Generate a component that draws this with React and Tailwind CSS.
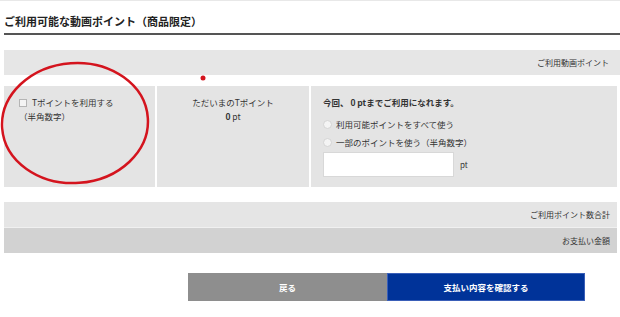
import React from 'react';

const font = { fontFamily: '"Noto Sans CJK JP", "Noto Sans", sans-serif' };

const Radio = ({ label }) => (
    <label className="flex items-center gap-[4px] h-[18px]">
        <span className="w-[9px] h-[9px] rounded-full border border-[#d4d4d4] bg-[#f4f4f4]" />
        <span>{label}</span>
    </label>
);

export default function App() {
    return (
        <div className="relative w-[620px] h-[317px] bg-white text-[#333] overflow-hidden" style={font}>
            <div className="h-[1px] bg-[#e8e8e8]" />

            <div className="pl-[4px]">
                {/* Title */}
                <h2 className="pt-[12px] pb-[4px] text-[11px] font-bold leading-[16px] text-[#222] border-b-2 border-[#555]">
                    ご利用可能な動画ポイント（商品限定）
                </h2>

                {/* Header row */}
                <div className="mt-[15px] h-[25px] bg-[#e6e6e6] flex items-center justify-end pr-[11px] text-[8px]">
                    ご利用動画ポイント
                </div>

                {/* Main row */}
                <div className="mt-[11px] h-[101px] mr-[3px] flex gap-[2px] text-[8.5px] leading-[13px]">
                    <div className="w-[151px] bg-[#e4e4e4] pl-[15px] pt-[10px]">
                        <div className="flex items-center gap-[5px]">
                            <span className="w-[8px] h-[8px] border border-[#b5b5b5] bg-[#f4f4f4]" />
                            <span>Tポイントを利用する</span>
                        </div>
                        <div className="mt-[1px]">（半角数字）</div>
                    </div>
                    <div className="w-[152px] bg-[#e4e4e4] pt-[10px] flex flex-col items-center">
                        <div>ただいまのTポイント</div>
                        <div className="mt-[1px]"><span className="font-bold">0</span> pt</div>
                    </div>
                    <div className="flex-1 bg-[#e4e4e4] pl-[12px] pt-[10px]">
                        <div className="font-bold">今回、 0 ptまでご利用になれます。</div>
                        <div className="mt-[6px] flex flex-col">
                            <Radio label="利用可能ポイントをすべて使う" />
                            <Radio label="一部のポイントを使う（半角数字）" />
                        </div>
                        <div className="mt-[1px] flex items-center gap-[6px]">
                            <div className="w-[131px] h-[25px] bg-white border border-[#d8d8d8]" />
                            <span className="text-[8px]">pt</span>
                        </div>
                    </div>
                </div>

                {/* Totals */}
                <div className="mt-[15px] mr-[3px] text-[8px]">
                    <div className="h-[26px] bg-[#e5e5e5] flex items-center justify-end pr-[7px] border-b border-[#f0f0f0]">
                        ご利用ポイント数合計
                    </div>
                    <div className="h-[25px] bg-[#d2d2d2] flex items-center justify-end pr-[7px]">
                        お支払い金額
                    </div>
                </div>

                {/* Buttons */}
                <div className="mt-[20px] flex pl-[184px]">
                    <button className="w-[199px] h-[28px] bg-[#8e8e8e] text-white text-[8.5px] font-bold">
                        戻る
                    </button>
                    <button className="w-[198px] h-[28px] bg-[#003399] border border-[#3a5fb8] text-white text-[8.5px] font-bold">
                        支払い内容を確認する
                    </button>
                </div>
            </div>

            {/* Red marker annotations */}
            <svg className="absolute left-0 top-0 pointer-events-none" width="620" height="317">
                <ellipse cx="75" cy="123" rx="73" ry="60" fill="none" stroke="#d4141e" strokeWidth="2.5" transform="rotate(-4 75 123)" />
                <circle cx="203" cy="78" r="2.5" fill="#d4141e" />
            </svg>
        </div>
    );
}
